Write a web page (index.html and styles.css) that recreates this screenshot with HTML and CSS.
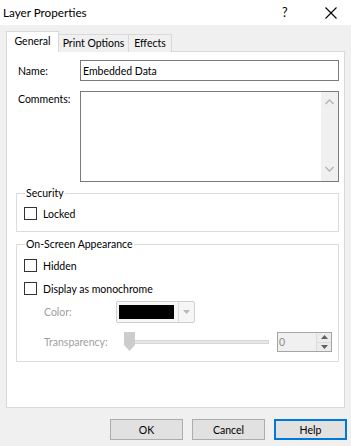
FILE: index.html
```html
<!DOCTYPE html>
<html>
<head>
<meta charset="utf-8">
<link rel="stylesheet" href="styles.css">
</head>
<body>
<div class="window">
  <div class="titlebar">
    <span class="title">Layer Properties</span>
    <span class="qmark">?</span>
    <svg class="close" width="12" height="12" viewBox="0 0 12 12"><path d="M0.5 0.5 L11.5 11.5 M11.5 0.5 L0.5 11.5" stroke="#000" stroke-width="1.1" fill="none"/></svg>
  </div>
  <div class="content">
    <div class="tabs">
      <div class="tab active">General</div>
      <div class="tab t-print">Print Options</div>
      <div class="tab t-effects">Effects</div>
    </div>
    <div class="panel">
      <div class="row name-row">
        <span class="lbl">Name:</span>
        <div class="input">Embedded Data</div>
      </div>
      <div class="row comments-row">
        <span class="lbl">Comments:</span>
        <div class="textarea">
          <div class="vscroll">
            <svg width="9" height="6" viewBox="0 0 9 6"><path d="M0.5 5 L4.5 1 L8.5 5" stroke="#b4b4b4" stroke-width="1.4" fill="none"/></svg>
            <svg width="9" height="6" viewBox="0 0 9 6"><path d="M0.5 1 L4.5 5 L8.5 1" stroke="#b4b4b4" stroke-width="1.4" fill="none"/></svg>
          </div>
        </div>
      </div>
      <div class="group security">
        <div class="legend">Security</div>
        <div class="check"><span class="box"></span><span>Locked</span></div>
      </div>
      <div class="group appearance">
        <div class="legend">On-Screen Appearance</div>
        <div class="check"><span class="box"></span><span>Hidden</span></div>
        <div class="check mono"><span class="box"></span><span>Display as monochrome</span></div>
        <div class="color-row">
          <span class="dlbl">Color:</span>
          <div class="combo">
            <span class="swatch"></span>
            <span class="drop"><svg width="7" height="4" viewBox="0 0 7 4"><path d="M0 0 H7 L3.5 4 Z" fill="#b9b9b9"/></svg></span>
          </div>
        </div>
        <div class="trans-row">
          <span class="dlbl tl">Transparency:</span>
          <div class="slider">
            <span class="track"></span>
            <svg class="thumb" width="11" height="19" viewBox="0 0 11 19"><path d="M0 0 H11 V13 L5.5 19 L0 13 Z" fill="#cccccc"/></svg>
          </div>
          <div class="spin">
            <span class="val">0</span>
            <span class="spinbtns">
              <span class="sb"><svg width="7" height="4" viewBox="0 0 7 4"><path d="M0 4 H7 L3.5 0 Z" fill="#606060"/></svg></span>
              <span class="sb"><svg width="7" height="4" viewBox="0 0 7 4"><path d="M0 0 H7 L3.5 4 Z" fill="#606060"/></svg></span>
            </span>
          </div>
        </div>
      </div>
    </div>
    <div class="buttons">
      <div class="btn">OK</div>
      <div class="btn">Cancel</div>
      <div class="btn default">Help</div>
    </div>
  </div>
</div>
</body>
</html>
```
FILE: styles.css
```css
* { box-sizing: border-box; }
html, body { margin: 0; padding: 0; }
body {
  width: 351px;
  height: 446px;
  background: #f0f0f0;
  font-family: Lato, "Liberation Sans", Arial, sans-serif;
  font-size: 10.5px;
  color: #000;
  overflow: hidden;
  white-space: nowrap;
}
.window { width: 351px; height: 446px; }
.titlebar {
  height: 25px;
  background: #fff;
  display: flex;
  align-items: center;
  padding-left: 3px;
}
.title { flex: 1; font-size: 11.7px; padding-bottom: 1px; }
.qmark { width: 9px; margin-right: 34px; font-size: 12.5px; }
.close { margin-right: 14px; }
.content { padding: 6px 0 0 6px; }
.tabs {
  display: flex;
  align-items: flex-end;
  height: 21px;
  margin-bottom: -1px;
}
.tab {
  height: 18px;
  border: 1px solid #d9d9d9;
  border-bottom: none;
  background: #f0f0f0;
  display: flex;
  align-items: center;
  justify-content: center;
  line-height: 15px;
}
.tab.active {
  height: 21px;
  width: 53px;
  background: #fff;
  position: relative;
  z-index: 1;
  padding-bottom: 2px;
}
.t-print { width: 71px; margin-left: -1px; }
.t-effects { width: 44px; margin-left: -1px; }
.panel {
  width: 339px;
  height: 357px;
  background: #fff;
  border: 1px solid #d9d9d9;
}
.row { display: flex; }
.lbl { width: 73px; padding-left: 11px; }
.name-row { margin-top: 8px; align-items: center; }
.input {
  width: 259px;
  height: 21px;
  border: 1px solid #7a7a7a;
  padding-left: 2px;
  display: flex;
  align-items: center;
}
.comments-row { margin-top: 10px; }
.comments-row .lbl { padding-top: 2px; }
.textarea {
  width: 259px;
  height: 91px;
  border: 1px solid #7a7a7a;
  display: flex;
  justify-content: flex-end;
}
.vscroll {
  width: 17px;
  height: 100%;
  background: #f0f0f0;
  display: flex;
  flex-direction: column;
  justify-content: space-between;
  align-items: center;
  padding: 7px 0 9px;
}
.group {
  margin-left: 9px;
  width: 323px;
  border: 1px solid #dcdcdc;
  padding: 0 0 0 7px;
}
.security { margin-top: 11px; padding-bottom: 10px; }
.appearance { margin-top: 12px; padding-bottom: 9px; }
.legend {
  display: table;
  margin: -8px 0 0 1px;
  padding: 0 1px;
  background: #fff;
  line-height: 15px;
}
.check {
  display: flex;
  align-items: center;
  height: 15px;
  margin-top: 5px;
}
.appearance .check { margin-top: 6px; }
.appearance .check.mono { margin-top: 8px; }
.box {
  width: 13px;
  height: 13px;
  border: 1px solid #333;
  background: #fff;
  margin-right: 6px;
}
.dlbl { color: #a0a0a0; margin-left: 20px; }
.color-row { display: flex; align-items: center; margin-top: 5px; }
.color-row .dlbl { width: 72px; }
.combo {
  width: 79px;
  height: 22px;
  border: 1px solid #cfcfcf;
  border-radius: 2px;
  background: #f6f6f6;
  display: flex;
  align-items: center;
  padding-left: 2px;
}
.swatch { width: 55px; height: 14px; background: #000; }
.drop {
  margin-left: 4px;
  height: 100%;
  flex: 1;
  border-left: 1px solid #dadada;
  display: flex;
  align-items: center;
  justify-content: center;
}
.trans-row { display: flex; align-items: center; margin-top: 9px; height: 20px; }
.trans-row .dlbl { width: 80px; }
.slider {
  position: relative;
  width: 146px;
  height: 20px;
  display: flex;
  align-items: center;
}
.track {
  margin-left: 6px;
  width: 139px;
  height: 4px;
  background: #e7e7e7;
  border: 1px solid #d6d6d6;
}
.thumb { position: absolute; left: 0; top: 0; }
.spin {
  margin-left: 7px;
  width: 55px;
  height: 20px;
  border: 1px solid #a5a5a5;
  background: #f0f0f0;
  display: flex;
  align-items: center;
}
.val { flex: 1; padding-left: 1px; color: #8a8a8a; }
.spinbtns { width: 15px; height: 18px; display: flex; flex-direction: column; }
.sb {
  flex: 1;
  display: flex;
  align-items: center;
  justify-content: center;
  border-left: 1px solid #dcdcdc;
  background: #ececec;
}
.sb + .sb { border-top: 1px solid #dcdcdc; }
.buttons {
  display: flex;
  justify-content: flex-end;
  gap: 9px;
  margin-top: 11px;
  padding-right: 4px;
}
.btn {
  width: 73px;
  height: 21px;
  background: #e1e1e1;
  border: 1px solid #adadad;
  display: flex;
  align-items: center;
  justify-content: center;
}
.btn.default { border: 2px solid #0078d7; }
```
